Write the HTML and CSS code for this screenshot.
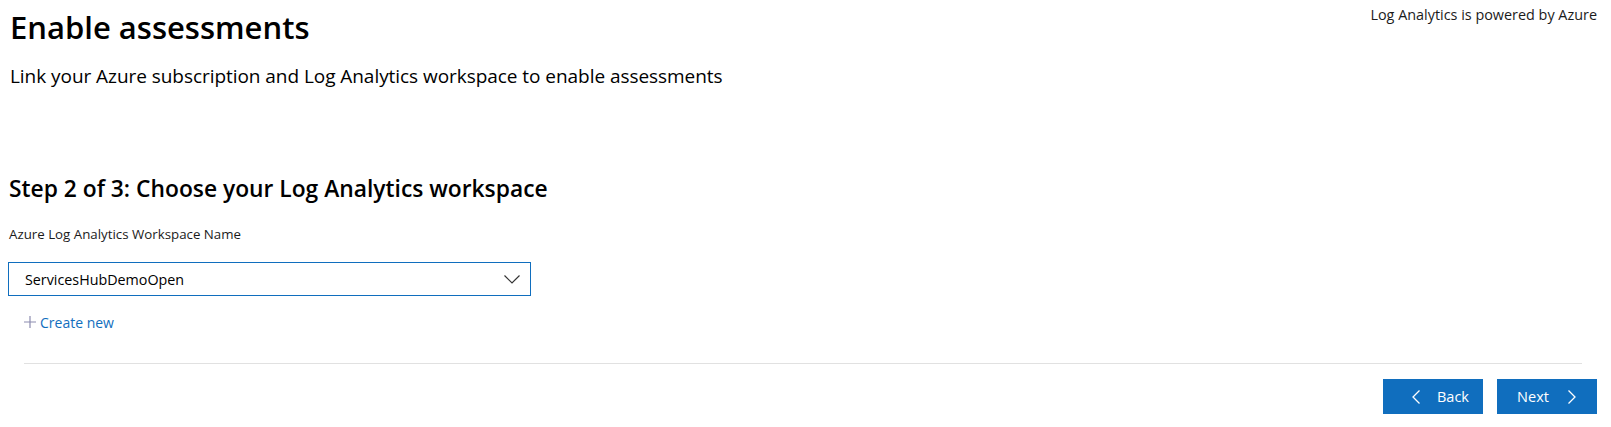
FILE: index.html
```html
<!DOCTYPE html>
<html lang="en">
<head>
<meta charset="utf-8">
<title>Enable assessments</title>
<link rel="stylesheet" href="styles.css">
</head>
<body>
<div class="page">
  <div class="top-row">
    <h1 class="title">Enable assessments</h1>
    <div class="powered">Log Analytics is powered by Azure</div>
  </div>
  <p class="subtitle">Link your Azure subscription and Log Analytics workspace to enable assessments</p>

  <h2 class="step">Step 2 of 3: Choose your Log Analytics workspace</h2>
  <label class="field-label">Azure Log Analytics Workspace Name</label>
  <div class="dropdown">
    <span class="dropdown-value">ServicesHubDemoOpen</span>
    <svg class="chev" width="16" height="9" viewBox="0 0 16 9"><path d="M0.5 0.5 L8 8 L15.5 0.5" fill="none" stroke="#333" stroke-width="1.2"/></svg>
  </div>
  <a class="create-new" href="#">
    <svg class="plus" width="12" height="12" viewBox="0 0 12 12"><path d="M6 0 V12 M0 6 H12" stroke="#8c8cb0" stroke-width="1.2"/></svg>
    <span>Create new</span>
  </a>
  <div class="divider"></div>
  <div class="actions">
    <button class="btn btn-back">
      <svg class="btn-chev" width="10" height="14" viewBox="0 0 10 14"><path d="M8.5 0.5 L2 7 L8.5 13.5" fill="none" stroke="#fff" stroke-width="1.3"/></svg>
      <span>Back</span>
    </button>
    <button class="btn btn-next">
      <span>Next</span>
      <svg class="btn-chev" width="10" height="14" viewBox="0 0 10 14"><path d="M1.5 0.5 L8 7 L1.5 13.5" fill="none" stroke="#fff" stroke-width="1.3"/></svg>
    </button>
  </div>
</div>
</body>
</html>
```

FILE: styles.css
```css
html, body {
  margin: 0;
  padding: 0;
  background: #fff;
}
body {
  font-family: "Open Sans", "Noto Sans", "Liberation Sans", sans-serif;
  color: #000;
}
.page {
  padding: 0 14px 0 8px;
}
.top-row {
  display: flex;
  justify-content: space-between;
  align-items: flex-start;
}
.title {
  margin: 7px 0 0 2px;
  font-size: 31px;
  font-weight: 600;
  line-height: 40px;
}
.powered {
  margin-top: 5px;
  font-size: 14.4px;
  line-height: 20px;
  color: #1b1b1b;
}
.subtitle {
  margin: 15px 0 0 2px;
  font-size: 19px;
  line-height: 28px;
  letter-spacing: -0.05px;
}
.step {
  margin: 84px 0 0 1px;
  font-size: 22.8px;
  font-weight: 600;
  line-height: 30px;
}
.field-label {
  display: block;
  margin: 21px 0 0 1px;
  font-size: 13.3px;
  line-height: 18px;
  color: #1b1b1b;
}
.dropdown {
  margin-top: 19px;
  width: 523px;
  height: 34px;
  box-sizing: border-box;
  border: 1px solid #106ebe;
  display: flex;
  align-items: center;
  justify-content: space-between;
  padding: 0 10px 0 16px;
}
.dropdown-value {
  font-size: 14.3px;
  color: #000;
}
.chev {
  display: block;
}
.create-new {
  margin: 16px 0 0 16px;
  display: flex;
  align-items: center;
  gap: 4px;
  height: 20px;
  text-decoration: none;
  color: #106ebe;
  font-size: 14px;
  width: max-content;
}
.plus {
  display: block;
}
.divider {
  margin: 31px 15px 0 16px;
  height: 1px;
  background: #e1e1e1;
}
.actions {
  margin-top: 15px;
  display: flex;
  justify-content: flex-end;
  gap: 14px;
}
.btn {
  width: 100px;
  height: 35px;
  border: none;
  background: #106ebe;
  color: #fff;
  font-family: inherit;
  font-size: 14.5px;
  display: flex;
  align-items: center;
  justify-content: center;
  padding: 0;
}
.btn-back {
  gap: 16px;
  padding-left: 14px;
}
.btn-next {
  gap: 18px;
}
.btn-chev {
  display: block;
}
```
